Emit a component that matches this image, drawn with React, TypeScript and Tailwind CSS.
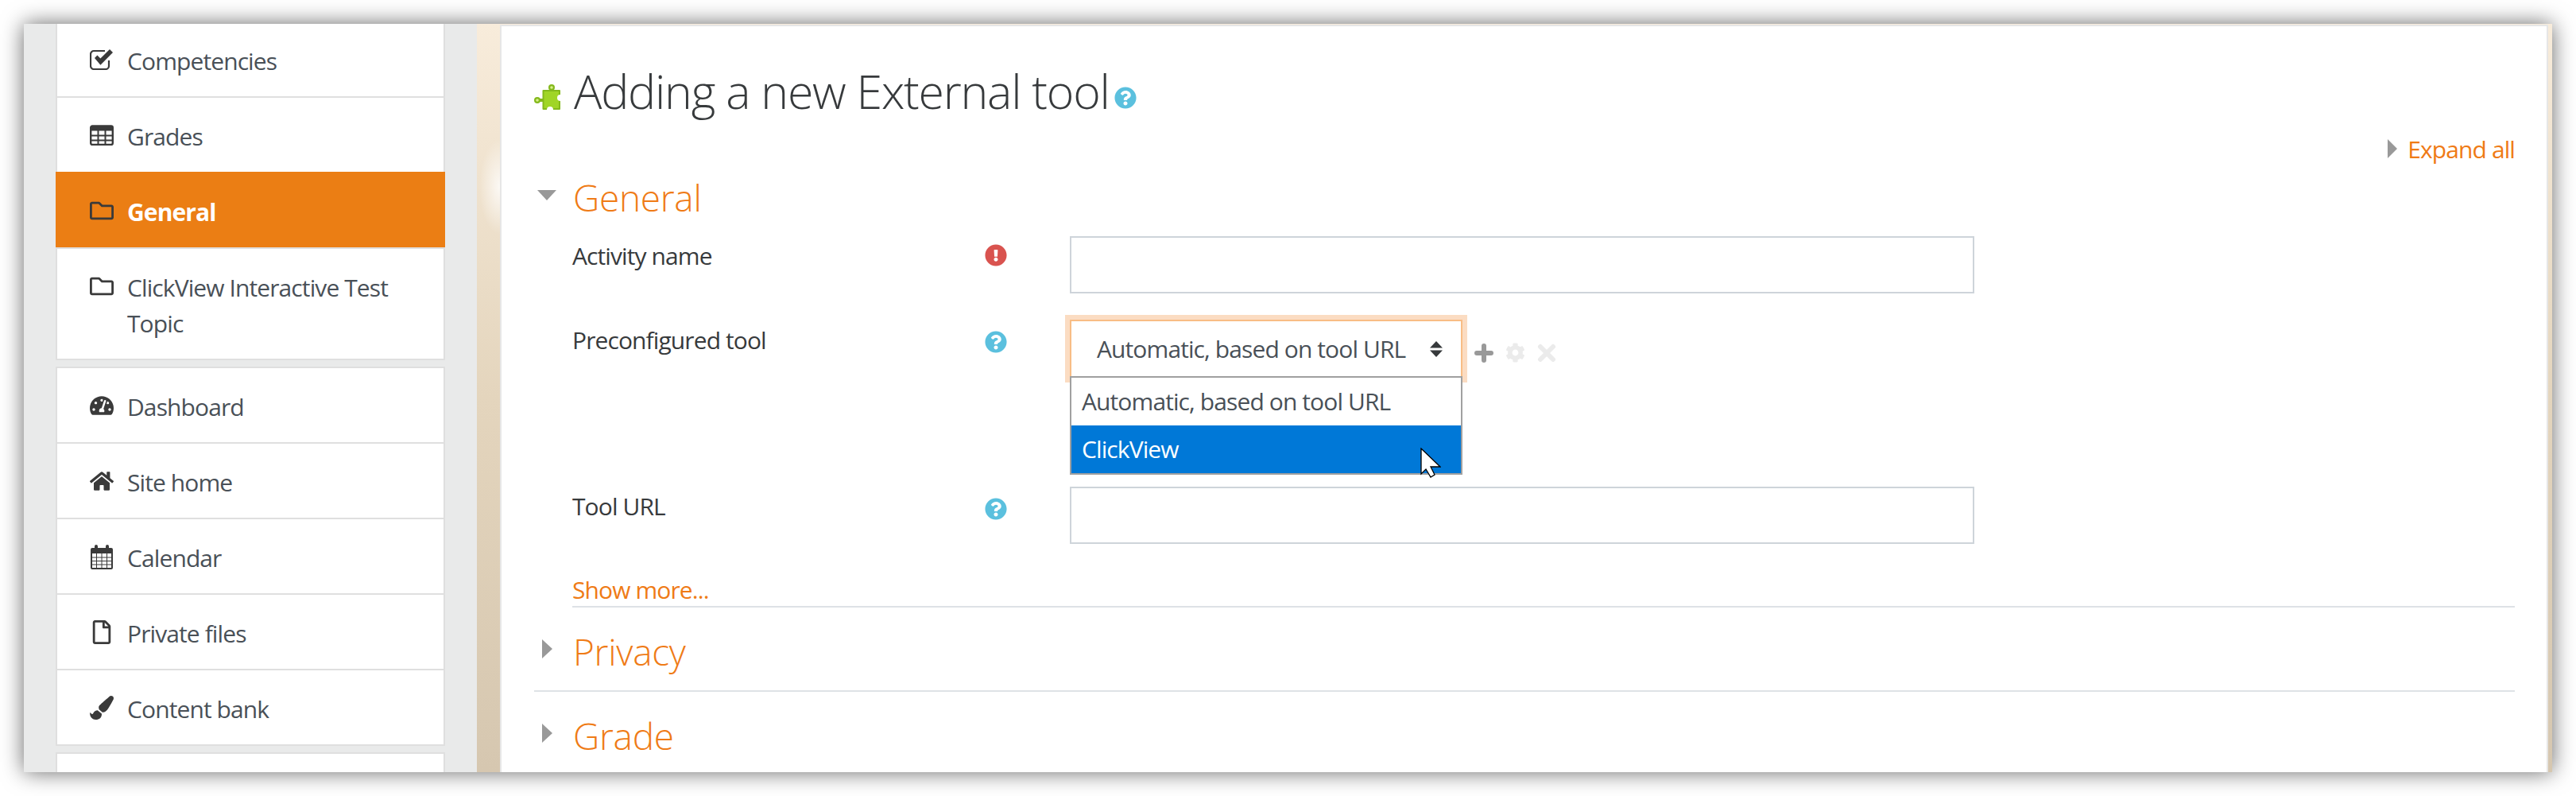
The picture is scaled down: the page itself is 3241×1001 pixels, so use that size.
import type { ReactNode } from "react";
import {
  FaCog,
  FaExclamationCircle,
  FaHome,
  FaPaintBrush,
  FaQuestionCircle,
  FaRegFile,
  FaRegFolder,
  FaTachometerAlt,
} from "react-icons/fa";

function CheckIcon() {
  return (
    <svg viewBox="0 0 30 26" className="w-[30px] h-[26px]">
      <path d="M24 14v7a4 4 0 0 1-4 4H5a4 4 0 0 1-4-4V6a4 4 0 0 1 4-4h14" fill="none" stroke="currentColor" strokeWidth="2.2" />
      <path d="M6 11l3.400-3.400 4 4L25 0l4 4-15.600 15.800z" fill="currentColor" />
    </svg>
  );
}

function GridIcon() {
  return (
    <svg viewBox="0 0 30 26" className="w-[30px] h-[26px]">
      <rect x="1.200" y="1.500" width="27.600" height="23.500" rx="2" fill="#fff" stroke="currentColor" strokeWidth="2.400" />
      <rect x="1" y="1" width="28" height="6.500" fill="currentColor" />
      <path d="M10.500 7v18M19.500 7v18M2 13.500h26M2 19.500h26" stroke="currentColor" strokeWidth="2" fill="none" />
    </svg>
  );
}

function CalendarIcon() {
  return (
    <svg viewBox="0 0 30 32" className="w-[30px] h-[32px]">
      <path d="M3 5h3V3a2 2 0 0 1 4 0v2h10V3a2 2 0 0 1 4 0v2h3a2 2 0 0 1 2 2v23a2 2 0 0 1-2 2H3a2 2 0 0 1-2-2V7a2 2 0 0 1 2-2z" fill="currentColor" />
      <rect x="3" y="12" width="24" height="18" fill="#fff" />
      <path d="M3 17h24M3 21.500h24M3 26h24M8.500 12v18M15 12v18M21.500 12v18" stroke="currentColor" strokeWidth="1" fill="none" />
    </svg>
  );
}

function PuzzleIcon() {
  return (
    <svg viewBox="0 0 33 32" className="w-[33px] h-[32px] mr-[17px] mt-[16px]">
      <g fill="#84b91c">
        <rect x="10.500" y="7" width="22.500" height="25" rx="1" />
        <circle cx="22" cy="4" r="4" />
        <circle cx="4" cy="20" r="4" />
        <rect x="6" y="18" width="6" height="4" />
      </g>
      <rect x="12.500" y="9" width="18.500" height="21" fill="#a0d526" />
      <circle cx="22" cy="4" r="1.800" fill="#d8f08a" />
      <circle cx="4" cy="20" r="1.800" fill="#d8f08a" />
      <circle cx="33" cy="17" r="4" fill="#fff" />
      <circle cx="20" cy="32" r="4" fill="#fff" />
    </svg>
  );
}

function Cursor() {
  return (
    <svg viewBox="0 0 26 38" className="absolute left-[439px] top-[88px] w-[26px] h-[38px]">
      <path d="M1 1V33L7 27L13 37L18 34L13 24H25Z" fill="#fff" stroke="#000" strokeWidth="1.300" strokeLinejoin="miter" />
    </svg>
  );
}

function NavRow({ icon, label, active, last }: { icon: ReactNode; label: string; active?: boolean; last?: boolean }) {
  return (
    <div
      className={`flex items-start gap-[17px] border-[#dfdfdf] ${last ? "" : "border-b-2"} ${
        active
          ? "mx-[-2px] mt-[-2px] bg-[#eb7e14] pb-[24px] pl-[43px] pr-[22px] pt-[26px] font-bold text-white"
          : "bg-white py-[24px] pl-[41px] pr-[20px] text-[#495057]"
      }`}
    >
      <span className="flex h-[45px] w-[30px] shrink-0 items-center justify-center text-[30px] text-[#3a3a3a]">{icon}</span>
      <span className="translate-y-[1.500px] text-[30px] leading-[45px] tracking-[-0.9px]">{label}</span>
    </div>
  );
}

function Sidebar() {
  return (
    <div className="flex h-full w-[570px] shrink-0 flex-col gap-[8px] overflow-hidden bg-[#e9eaea] pl-[40px] pr-[40px]">
      <div className="mt-[-2px] border-x-2 border-b-2 border-[#dfdfdf]">
        <NavRow icon={<CheckIcon />} label="Competencies" />
        <NavRow icon={<GridIcon />} label="Grades" />
        <NavRow icon={<FaRegFolder />} label="General" active />
        <NavRow icon={<FaRegFolder />} label="ClickView Interactive Test Topic" last />
      </div>
      <div className="border-2 border-[#dfdfdf]">
        <NavRow icon={<FaTachometerAlt />} label="Dashboard" />
        <NavRow icon={<FaHome />} label="Site home" />
        <NavRow icon={<CalendarIcon />} label="Calendar" />
        <NavRow icon={<FaRegFile />} label="Private files" />
        <NavRow icon={<FaPaintBrush />} label="Content bank" last />
      </div>
      <div className="h-[60px] shrink-0 border-2 border-[#dfdfdf] bg-white" />
    </div>
  );
}

function FormRow({
  label,
  error,
  labelTop,
  iconTop,
  children,
}: {
  label: string;
  error?: boolean;
  labelTop: string;
  iconTop: string;
  children: ReactNode;
}) {
  return (
    <div className="flex pl-[48px]">
      <div className={`w-[519px] shrink-0 text-[30px] leading-[45px] tracking-[-0.9px] text-[#373a3c] ${labelTop}`}>{label}</div>
      <div className={`w-[107px] shrink-0 ${iconTop}`}>
        {error ? (
          <FaExclamationCircle className="text-[28px] text-[#d9534f]" />
        ) : (
          <FaQuestionCircle className="text-[28px] text-[#5bc0de]" />
        )}
      </div>
      {children}
    </div>
  );
}

function TextInput() {
  return <div className="h-[72px] w-[1138px] border-2 border-[#ced4da] bg-white" />;
}

function SectionHeader({ label, open }: { label: string; open?: boolean }) {
  return (
    <div className="flex h-[60px] items-center">
      <div className="mt-[-6px] flex w-[49px] shrink-0 pl-[4px]">
        {open ? (
          <div className="h-0 w-0 border-x-[12px] border-t-[13px] border-x-transparent border-t-[#999]" />
        ) : (
          <div className="ml-[6px] h-0 w-0 border-y-[12px] border-l-[13px] border-y-transparent border-l-[#999]" />
        )}
      </div>
      <div className="text-[46px] font-light leading-[60px] tracking-[-0.3px] text-[#ef7b16]">{label}</div>
    </div>
  );
}

function SelectField() {
  return (
    <div className="flex">
      <div className="relative h-[73px] w-[494px] border-2 border-[#f8bd85] bg-white shadow-[0_0_0_6px_#fbdcc2]">
        <div className="flex h-[69px] items-center pl-[32px] text-[30px] leading-[45px] tracking-[-0.9px] text-[#495057]">
          Automatic, based on tool URL
        </div>
        <svg viewBox="0 0 16 20" className="absolute left-[451px] top-[25px] w-[16px] h-[20px] text-[#373a3c]">
          <path d="M8 0l8 8.500H0zM8 20l-8-8.500h16z" fill="currentColor" />
        </svg>
        <div className="absolute left-[-2px] top-[69px] z-10 w-[494px] border-2 border-[#a0a0a0] bg-white text-[30px] leading-[60px] tracking-[-0.9px] text-[#495057]">
          <div className="h-[60px] pl-[13px]">Automatic, based on tool URL</div>
          <div className="h-[60px] bg-[#0078d7] pl-[13px] text-white">ClickView</div>
          <Cursor />
        </div>
      </div>
      <div className="flex h-[73px] items-center gap-[15px] pl-[15px] pt-[10px]">
        <svg viewBox="0 0 24 24" className="w-[24px] h-[24px] text-[#999]">
          <path d="M12 3v18M3 12h18" stroke="currentColor" strokeWidth="6" strokeLinecap="round" />
        </svg>
        <FaCog className="text-[25px] text-[#ebebeb]" />
        <svg viewBox="0 0 24 24" className="w-[24px] h-[24px] text-[#ebebeb]">
          <path d="M4 4l16 16M20 4L4 20" stroke="currentColor" strokeWidth="6" strokeLinecap="round" />
        </svg>
      </div>
    </div>
  );
}

function MainPanel() {
  return (
    <div className="mr-[5px] mt-[1px] flex-1 border-x-2 border-t-2 border-[#e6e6e6] bg-white pl-[41px] pr-[40px] pt-[45px]">
      <div className="flex h-[72px] items-center">
        <PuzzleIcon />
        <h1 className="text-[59px] font-light leading-[72px] tracking-[-1.23px] text-[#373a3c]">Adding a new External tool</h1>
        <FaQuestionCircle className="ml-[6px] mt-[17px] text-[28px] text-[#5bc0de]" />
      </div>
      <div className="mt-[22px] flex h-[30px] items-center justify-end">
        <div className="mr-[13px] h-0 w-0 border-y-[12px] border-l-[12px] border-y-transparent border-l-[#999]" />
        <span className="text-[30px] tracking-[-0.9px] text-[#ef7b16]">Expand all</span>
      </div>
      <div className="mt-[16px]">
        <SectionHeader label="General" open />
      </div>
      <div className="mt-[19px]">
        <FormRow label="Activity name" error labelTop="pt-[2px]" iconTop="pt-[10px]">
          <TextInput />
        </FormRow>
      </div>
      <div className="mt-[33px] h-[210px]">
        <FormRow label="Preconfigured tool" labelTop="pt-[3px]" iconTop="pt-[14px]">
          <SelectField />
        </FormRow>
      </div>
      <FormRow label="Tool URL" labelTop="pt-[2px]" iconTop="pt-[14px]">
        <TextInput />
      </FormRow>
      <div className="ml-[48px] mt-[42px] border-b-2 border-[#dee2e6] pb-[4px]">
        <div className="text-[30px] leading-[32px] tracking-[-0.9px] text-[#ef7b16]">Show more...</div>
      </div>
      <div className="mt-[25px] border-b-2 border-[#dee2e6] pb-[19px]">
        <SectionHeader label="Privacy" />
      </div>
      <div className="mt-[25px]">
        <SectionHeader label="Grade" />
      </div>
    </div>
  );
}

export default function App() {
  return (
    <div className="h-[1001px] w-[3241px] overflow-hidden bg-white pl-[30px] pt-[30px] font-['Open_Sans',sans-serif]">
      <div className="flex h-[941px] w-[3181px] bg-gradient-to-b from-[#f8ecdb] via-[#e4d5bd] to-[#d6c7b0] shadow-[0_0_26px_rgba(0,0,0,0.6)]">
        <Sidebar />
        <div className="w-[29px] shrink-0 bg-[radial-gradient(ellipse_26px_60px_at_100%_205px,#ffffffcc,transparent)]" />
        <MainPanel />
      </div>
    </div>
  );
}
